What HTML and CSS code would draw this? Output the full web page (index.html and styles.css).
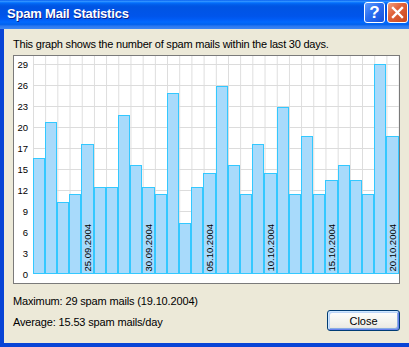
FILE: index.html
```html
<!DOCTYPE html>
<html lang="en">
<head>
    <meta charset="UTF-8">
    <title>Spam Mail Statistics</title>
    <link rel="stylesheet" href="styles.css">
</head>
<body>
<div class="window">
    <div class="titlebar">
        <span class="title">Spam Mail Statistics</span>
        <div class="title-buttons">
            <button class="tb-btn tb-help">?</button>
            <button class="tb-btn tb-close">
                <svg width="13" height="13" viewBox="0 0 13 13">
                    <path d="M2 2 L11 11 M11 2 L2 11" stroke="#fff" stroke-width="2.4" stroke-linecap="square"/>
                </svg>
            </button>
        </div>
    </div>
    <div class="dialog">
        <p class="intro">This graph shows the number of spam mails within the last 30 days.</p>
        <div class="chart">
            <div class="y-axis">
                <span>29</span><span>26</span><span>23</span><span>20</span><span>17</span><span>15</span>
                <span>12</span><span>9</span><span>6</span><span>3</span><span>0</span>
            </div>
            <div class="plot">
                <div class="bar" style="height: 55.17%"></div>
                <div class="bar" style="height: 72.41%"></div>
                <div class="bar" style="height: 34.48%"></div>
                <div class="bar" style="height: 37.93%"></div>
                <div class="bar" style="height: 62.07%"><span class="date">25.09.2004</span></div>
                <div class="bar" style="height: 41.38%"></div>
                <div class="bar" style="height: 41.38%"></div>
                <div class="bar" style="height: 75.86%"></div>
                <div class="bar" style="height: 51.72%"></div>
                <div class="bar" style="height: 41.38%"><span class="date">30.09.2004</span></div>
                <div class="bar" style="height: 37.93%"></div>
                <div class="bar" style="height: 86.21%"></div>
                <div class="bar" style="height: 24.14%"></div>
                <div class="bar" style="height: 41.38%"></div>
                <div class="bar" style="height: 48.28%"><span class="date">05.10.2004</span></div>
                <div class="bar" style="height: 89.66%"></div>
                <div class="bar" style="height: 51.72%"></div>
                <div class="bar" style="height: 37.93%"></div>
                <div class="bar" style="height: 62.07%"></div>
                <div class="bar" style="height: 48.28%"><span class="date">10.10.2004</span></div>
                <div class="bar" style="height: 79.31%"></div>
                <div class="bar" style="height: 37.93%"></div>
                <div class="bar" style="height: 65.52%"></div>
                <div class="bar" style="height: 37.93%"></div>
                <div class="bar" style="height: 44.83%"><span class="date">15.10.2004</span></div>
                <div class="bar" style="height: 51.72%"></div>
                <div class="bar" style="height: 44.83%"></div>
                <div class="bar" style="height: 37.93%"></div>
                <div class="bar" style="height: 100%"></div>
                <div class="bar" style="height: 65.52%"><span class="date">20.10.2004</span></div>
            </div>
        </div>
        <div class="footer">
            <div class="stats">
                <div>Maximum: 29 spam mails (19.10.2004)</div>
                <div>Average: 15.53 spam mails/day</div>
            </div>
            <button class="close-button">Close</button>
        </div>
    </div>
</div>
</body>
</html>
```

FILE: styles.css
```css
body, html {
    margin: 0;
    padding: 0;
}

body {
    width: 409px;
    height: 347px;
    overflow: hidden;
    font-family: "Liberation Sans", Arial, sans-serif;
    font-size: 11px;
    color: #000;
}

.window {
    height: 347px;
    display: flex;
    flex-direction: column;
}

.titlebar {
    height: 29px;
    flex-shrink: 0;
    display: flex;
    justify-content: space-between;
    align-items: flex-start;
    padding: 0 1px 0 7px;
    background: linear-gradient(to bottom, #0058ee 0%, #3593ff 4%, #288eff 6%, #127dff 8%, #036ffc 10%,
        #0262ee 14%, #0057e5 20%, #0054e3 24%, #0055eb 56%, #005bf5 66%, #026afe 76%, #0062ef 84%,
        #2a78f0 90%, #3b86f4 100%);
}

.title {
    margin-top: 6px;
    line-height: 15px;
    font-size: 13px;
    font-weight: bold;
    letter-spacing: -0.2px;
    color: #fff;
    text-shadow: 1px 1px #0f1f8a;
}

.title-buttons {
    display: flex;
    gap: 2px;
    margin-top: 2px;
}

.tb-btn {
    width: 21px;
    height: 21px;
    padding: 0;
    border: 1px solid #fff;
    border-radius: 3px;
    display: flex;
    justify-content: center;
    align-items: center;
    color: #fff;
    font-family: "Liberation Sans", Arial, sans-serif;
    font-size: 17px;
    font-weight: bold;
    line-height: 1;
}

.tb-help {
    background: linear-gradient(135deg, #5e9bff 0%, #2a6ef0 45%, #1650dc 100%);
}

.tb-close {
    background: linear-gradient(135deg, #f0a080 0%, #e0623a 40%, #c8461c 100%);
}

.dialog {
    flex: 1;
    display: flex;
    flex-direction: column;
    padding: 8px 9px 0 9px;
    background-color: #ece9d8;
    border-left: 4px solid #0844d6;
    border-bottom: 4px solid #0844d6;
    letter-spacing: -0.15px;
}

.intro {
    margin: 0 0 4px 0;
    line-height: 14px;
    letter-spacing: -0.22px;
}

.chart {
    height: 227px;
    flex-shrink: 0;
    display: flex;
    border: 1px solid #7a7a7a;
    background-color: #fff;
    box-sizing: content-box;
    letter-spacing: 0;
}

.y-axis {
    width: 19px;
    padding-right: 5px;
    box-sizing: border-box;
    margin-top: -2.5px;
    display: flex;
    flex-direction: column;
    align-items: flex-end;
    font-size: 9.5px;
    line-height: 21px;
}

.plot {
    flex: 1;
    height: 210px;
    padding-top: 8px;
    display: flex;
    align-items: flex-end;
    background-image:
        linear-gradient(to right, #dcdcdc 1px, transparent 1px),
        linear-gradient(to bottom, #dcdcdc 1px, transparent 1px);
    background-size: calc(100% / 30) 100%, 100% 21px;
    background-position: 0 0, 0 8px;
    background-repeat: repeat-x, repeat-y;
}

.bar {
    flex: 1;
    box-sizing: border-box;
    border: 1px solid #33c8ff;
    background-color: #a8dafb;
    display: flex;
    flex-direction: column;
    justify-content: flex-end;
    align-items: center;
    overflow: visible;
}

.date {
    writing-mode: vertical-rl;
    transform: rotate(180deg);
    font-size: 9.5px;
    line-height: 11px;
    margin-bottom: 1px;
    white-space: nowrap;
}

.footer {
    margin-top: 10px;
    display: flex;
    justify-content: space-between;
    align-items: flex-end;
}

.stats {
    display: flex;
    flex-direction: column;
    gap: 7px;
    line-height: 14px;
}

.close-button {
    width: 73px;
    height: 21px;
    margin-bottom: -2px;
    padding: 0;
    font-family: "Liberation Sans", Arial, sans-serif;
    font-size: 11px;
    letter-spacing: 0;
    color: #000;
    border: 1px solid #003c74;
    border-radius: 3px;
    background: linear-gradient(to bottom, #ffffff 0%, #f4f4ef 50%, #ecebe5 85%, #d8d2c6 100%);
    box-shadow: inset 1px 1px #cee7ff, inset -1px -1px #6982ee, inset 2px 2px #bcd4f6, inset -2px -2px #89ade4;
}
```
